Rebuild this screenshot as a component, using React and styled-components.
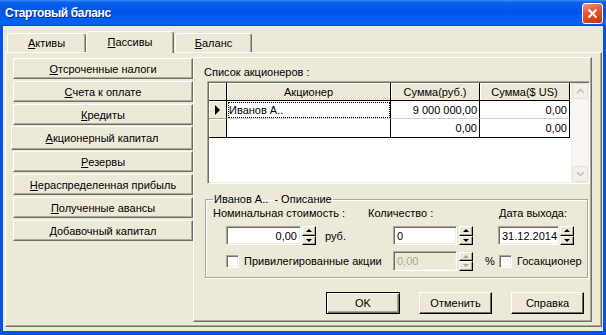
import React from 'react';
import styled, { createGlobalStyle } from 'styled-components';

const GlobalStyle = createGlobalStyle`
  * { box-sizing: border-box; }
  body {
    margin: 0;
    background: #fff;
    font-family: "Liberation Sans", Arial, sans-serif;
    font-size: 11px;
    color: #000;
  }
`;

const Window = styled.div`
  width: 606px;
  height: 335px;
  display: flex;
  flex-direction: column;
  background: #0852e6;
`;

const TitleBar = styled.div`
  flex: none;
  height: 26px;
  display: flex;
  align-items: center;
  justify-content: space-between;
  padding: 0 3px 0 5px;
  background: linear-gradient(180deg, #3c8ef7 0%, #0a5fee 10%, #0055e8 45%, #0461f4 85%, #0a5ef0 92%, #0047d6 100%);
`;

const Title = styled.span`
  color: #fff;
  font-weight: bold;
  font-size: 12px;
  letter-spacing: -0.4px;
  text-shadow: 1px 1px #0c2a8a;
`;

const CloseButton = styled.div`
  width: 21px;
  height: 21px;
  border: 1px solid #fff;
  border-radius: 3px;
  display: flex;
  align-items: center;
  justify-content: center;
  background: linear-gradient(160deg, #f09a7c 0%, #e5603b 35%, #d8431f 70%, #c63612 100%);
`;

const Body = styled.div`
  flex: 1;
  margin: 0 3px 4px 3px;
  padding: 0 1px 4px 2px;
  background: #ece9d8;
  display: flex;
  flex-direction: column;
`;

const TabStrip = styled.div`
  flex: none;
  height: 26px;
  display: flex;
  align-items: flex-end;
  padding-left: 2px;
`;

const Tab = styled.div`
  position: relative;
  z-index: ${p => (p.$active ? 2 : 0)};
  width: ${p => p.$w}px;
  height: ${p => (p.$active ? 22 : 19)}px;
  margin-bottom: ${p => (p.$active ? -1 : 0)}px;
  margin-left: ${p => p.$ml || 0}px;
  display: flex;
  align-items: center;
  justify-content: center;
  padding-bottom: ${p => (p.$active ? 1 : 0)}px;
  background: #ece9d8;
  border-top: 1px solid #fff;
  border-left: 1px solid #fff;
  border-right: 1px solid #716f64;
  box-shadow: inset -1px 0 #aca899;
  border-radius: 3px 3px 0 0;
`;

const TabPanel = styled.div`
  position: relative;
  z-index: 1;
  flex: 1;
  display: flex;
  padding: 4px 8px 4px 0;
  background: #ece9d8;
  border-top: 1px solid #fff;
  border-left: 1px solid #fff;
  border-right: 1px solid #716f64;
  border-bottom: 1px solid #716f64;
  box-shadow: inset -1px -1px #aca899;
`;

const SideColumn = styled.div`
  width: 187px;
  flex: none;
  display: flex;
  flex-direction: column;
  padding-top: 1px;
`;

const SideButton = styled.div`
  height: ${p => (p.$active ? 24 : 21)}px;
  margin: ${p => (p.$active ? '-1px 0 1px 5px' : '0 0 2px 7px')};
  display: flex;
  align-items: center;
  justify-content: center;
  background: #ece9d8;
  border-top: 1px solid #fff;
  border-left: 1px solid #fff;
  border-right: 1px solid #716f64;
  border-bottom: 1px solid #716f64;
  box-shadow: inset -1px -1px #aca899;
`;

const RightPanel = styled.div`
  width: 399px;
  flex: none;
  display: flex;
  flex-direction: column;
  padding: 7px 2px 0 10px;
  border-top: 1px solid #fff;
  border-left: 1px solid #fff;
  border-right: 1px solid #716f64;
  border-bottom: 1px solid #716f64;
  box-shadow: inset -1px -1px #aca899;
`;

const Caption = styled.div`
  line-height: 14px;
  white-space: nowrap;
`;

const Grid = styled.div`
  margin: 2px 0 0 3px;
  width: 383px;
  height: 103px;
  flex: none;
  display: flex;
  padding: 1px;
  background: #fff;
  border-top: 1px solid #aca899;
  border-left: 1px solid #aca899;
  border-right: 1px solid #fff;
  border-bottom: 1px solid #fff;
  box-shadow: inset 1px 1px #716f64, inset -1px -1px #f1efe2;
`;

const Table = styled.div`
  align-self: flex-start;
  display: grid;
  grid-template-columns: 18px 164px 89px 90px;
  grid-template-rows: 18px 18px 19px;
`;

const HeadCell = styled.div`
  display: flex;
  align-items: center;
  justify-content: center;
  background: #ece9d8;
  border-right: 1px solid #000;
  border-bottom: 1px solid ${p => (p.$soft ? '#aca899' : '#000')};
  box-shadow: inset 1px 1px #fff;
  white-space: nowrap;
`;

const DataCell = styled.div`
  display: flex;
  align-items: center;
  justify-content: ${p => (p.$right ? 'flex-end' : 'flex-start')};
  padding: 0 2px;
  background: #fff;
  border-right: 1px solid #000;
  border-bottom: 1px solid ${p => (p.$last ? '#000' : '#d4d0c8')};
  outline: ${p => (p.$focus ? '1px dotted #000' : 'none')};
  outline-offset: -2px;
  white-space: nowrap;
`;

const RowPointer = styled.span`
  width: 0;
  height: 0;
  border-top: 5px solid transparent;
  border-bottom: 5px solid transparent;
  border-left: 5px solid #000;
`;

const ScrollBar = styled.div`
  margin-left: auto;
  width: 17px;
  display: flex;
  flex-direction: column;
  justify-content: space-between;
  background: #f8f7f3;
  border-left: 1px solid #f0efe8;
`;

const ScrollButton = styled.div`
  height: 16px;
  display: flex;
  align-items: center;
  justify-content: center;
  background: #f1f0ea;
  border: 1px solid #e4e2d8;
  border-radius: 2px;
`;

const Group = styled.fieldset`
  margin: 9px 0 0 1px;
  width: 383px;
  min-width: 0;
  padding: 0 0 6px 7px;
  border: 1px solid #aca899;
  box-shadow: inset 1px 1px #fff, 1px 1px #fff;
`;

const Legend = styled.legend`
  margin-left: 0;
  padding: 0 1px;
  line-height: 13px;
  white-space: pre;
`;

const GroupGrid = styled.div`
  display: grid;
  grid-template-columns: 155px 130px 1fr;
  grid-template-rows: 14px 19px 20px;
  row-gap: 6px;
`;

const Cell = styled.div`
  display: flex;
  align-items: center;
  white-space: nowrap;
`;

const Field = styled.div`
  width: ${p => p.$w}px;
  height: ${p => p.$h || 19}px;
  margin-left: ${p => p.$ml || 0}px;
  flex: none;
  display: flex;
  align-items: center;
  justify-content: ${p => (p.$right ? 'flex-end' : 'flex-start')};
  padding: 0 3px;
  background: ${p => (p.$disabled ? '#ece9d8' : '#fff')};
  color: ${p => (p.$disabled ? '#aca899' : '#000')};
  border-top: 1px solid #aca899;
  border-left: 1px solid #aca899;
  border-right: 1px solid #fff;
  border-bottom: 1px solid #fff;
  box-shadow: inset 1px 1px #716f64, inset -1px -1px #f1efe2;
`;

const Spin = styled.div`
  width: 14px;
  height: 19px;
  margin-left: ${p => p.$ml || 1}px;
  flex: none;
  display: flex;
  flex-direction: column;
`;

const SpinHalf = styled.div`
  flex: 1;
  display: flex;
  align-items: center;
  justify-content: center;
  background: #ece9d8;
  border-top: 1px solid #fff;
  border-left: 1px solid #fff;
  border-right: 1px solid #000;
  border-bottom: 1px solid #000;
  box-shadow: inset -1px -1px #aca899;
`;

const Arrow = styled.span`
  width: 0;
  height: 0;
  border-left: 3px solid transparent;
  border-right: 3px solid transparent;
  ${p => (p.$down ? 'border-top' : 'border-bottom')}: 3px solid ${p => (p.$disabled ? '#aca899' : '#000')};
`;

const Check = styled.span`
  width: 13px;
  height: 13px;
  margin-left: ${p => p.$ml || 0}px;
  margin-right: ${p => p.$mr || 0}px;
  flex: none;
  background: #fff;
  border-top: 1px solid #aca899;
  border-left: 1px solid #aca899;
  border-right: 1px solid #fff;
  border-bottom: 1px solid #fff;
  box-shadow: inset 1px 1px #716f64, inset -1px -1px #f1efe2;
`;

const Text = styled.span`
  margin-left: ${p => p.$ml || 0}px;
`;

const ButtonRow = styled.div`
  display: flex;
  justify-content: flex-end;
  gap: 19px;
  margin-top: 14px;
  padding-right: 5px;
`;

const Button = styled.div`
  width: ${p => p.$w || 73}px;
  height: 22px;
  display: flex;
  align-items: center;
  justify-content: center;
  background: #ece9d8;
  border: 1px solid #000;
  border-top-color: ${p => (p.$default ? '#000' : '#fff')};
  border-left-color: ${p => (p.$default ? '#000' : '#fff')};
  box-shadow: ${p =>
    p.$default
      ? 'inset 1px 1px #fff, inset -1px -1px #716f64, inset -2px -2px #aca899'
      : 'inset -1px -1px #716f64'};
`;

const Mn = ({ t }) => (
  <>
    <u>{t[0]}</u>
    {t.slice(1)}
  </>
);

const Spinner = ({ ml, disabled }) => (
  <Spin $ml={ml}>
    <SpinHalf>
      <Arrow $disabled={disabled} />
    </SpinHalf>
    <SpinHalf>
      <Arrow $down $disabled={disabled} />
    </SpinHalf>
  </Spin>
);

const sideItems = [
  'Отсроченные налоги',
  'Счета к оплате',
  'Кредиты',
  'Акционерный капитал',
  'Резервы',
  'Нераспределенная прибыль',
  'Полученные авансы',
  'Добавочный капитал',
];

const rows = [
  { name: 'Иванов А..', rub: '9 000 000,00', usd: '0,00', current: true },
  { name: '', rub: '0,00', usd: '0,00' },
];

const Chevron = ({ down }) => (
  <svg width="9" height="6" viewBox="0 0 9 6">
    <path
      d={down ? 'M1 1 L4.5 4.5 L8 1' : 'M1 5 L4.5 1.5 L8 5'}
      fill="none"
      stroke="#c6c3b4"
      strokeWidth="1.6"
    />
  </svg>
);

export default function App() {
  return (
    <>
      <GlobalStyle />
      <Window>
        <TitleBar>
          <Title>Стартовый баланс</Title>
          <CloseButton>
            <svg width="11" height="11" viewBox="0 0 11 11">
              <path d="M1.5 1.5 L9.5 9.5 M9.5 1.5 L1.5 9.5" stroke="#fff" strokeWidth="2" />
            </svg>
          </CloseButton>
        </TitleBar>
        <Body>
          <TabStrip>
            <Tab $w={79}><Mn t="Активы" /></Tab>
            <Tab $w={88} $active><Mn t="Пассивы" /></Tab>
            <Tab $w={77} $ml={1}><Mn t="Баланс" /></Tab>
          </TabStrip>
          <TabPanel>
            <SideColumn>
              {sideItems.map(s => (
                <SideButton key={s} $active={s === 'Акционерный капитал'}>
                  <Mn t={s} />
                </SideButton>
              ))}
            </SideColumn>
            <RightPanel>
              <Caption>Список акционеров :</Caption>
              <Grid>
                <Table>
                  <HeadCell />
                  <HeadCell>Акционер</HeadCell>
                  <HeadCell>Сумма(руб.)</HeadCell>
                  <HeadCell>Сумма($ US)</HeadCell>
                  {rows.map((r, i) => (
                    <React.Fragment key={i}>
                      <HeadCell $soft={i === 0}>{r.current && <RowPointer />}</HeadCell>
                      <DataCell $focus={r.current} $last={i === rows.length - 1}>{r.name}</DataCell>
                      <DataCell $right $last={i === rows.length - 1}>{r.rub}</DataCell>
                      <DataCell $right $last={i === rows.length - 1}>{r.usd}</DataCell>
                    </React.Fragment>
                  ))}
                </Table>
                <ScrollBar>
                  <ScrollButton><Chevron /></ScrollButton>
                  <ScrollButton><Chevron down /></ScrollButton>
                </ScrollBar>
              </Grid>
              <Group>
                <Legend>Иванов А..  - Описание</Legend>
                <GroupGrid>
                  <Cell>Номинальная стоимость :</Cell>
                  <Cell>Количество :</Cell>
                  <Cell><Text $ml={1}>Дата выхода:</Text></Cell>

                  <Cell>
                    <Field $w={75} $ml={13} $right>0,00</Field>
                    <Spinner />
                    <Text $ml={9}>руб.</Text>
                  </Cell>
                  <Cell>
                    <Field $w={64} $ml={25}>0</Field>
                    <Spinner ml={2} />
                  </Cell>
                  <Cell>
                    <Field $w={61}>31.12.2014</Field>
                    <Spinner />
                  </Cell>

                  <Cell>
                    <Check $ml={13} $mr={5} />
                    Привилегированные акции
                  </Cell>
                  <Cell>
                    <Field $w={64} $ml={25} $h={20} $disabled>0,00</Field>
                    <Spinner ml={2} disabled />
                    <Text $ml={12}>%</Text>
                  </Cell>
                  <Cell>
                    <Check $ml={1} $mr={5} />
                    Госакционер
                  </Cell>
                </GroupGrid>
              </Group>
              <ButtonRow>
                <Button $default $w={74}>OK</Button>
                <Button>Отменить</Button>
                <Button>Справка</Button>
              </ButtonRow>
            </RightPanel>
          </TabPanel>
        </Body>
      </Window>
    </>
  );
}
